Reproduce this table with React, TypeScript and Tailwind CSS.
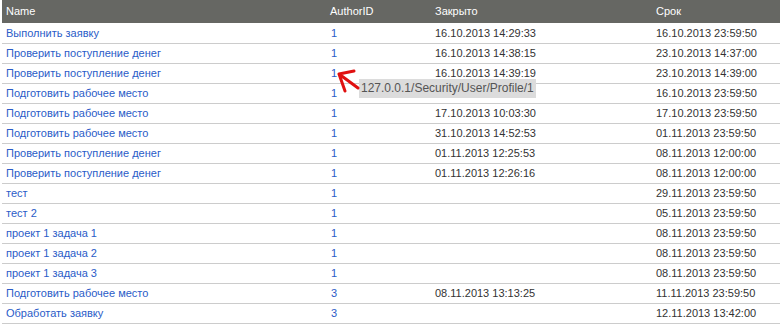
const rows: [string, string, string, string][] = [
  ["Выполнить заявку", "1", "16.10.2013 14:29:33", "16.10.2013 23:59:50"],
  ["Проверить поступление денег", "1", "16.10.2013 14:38:15", "23.10.2013 14:37:00"],
  ["Проверить поступление денег", "1", "16.10.2013 14:39:19", "23.10.2013 14:39:00"],
  ["Подготовить рабочее место", "1", "16.10.2013 14:45:15", "16.10.2013 23:59:50"],
  ["Подготовить рабочее место", "1", "17.10.2013 10:03:30", "17.10.2013 23:59:50"],
  ["Подготовить рабочее место", "1", "31.10.2013 14:52:53", "01.11.2013 23:59:50"],
  ["Проверить поступление денег", "1", "01.11.2013 12:25:53", "08.11.2013 12:00:00"],
  ["Проверить поступление денег", "1", "01.11.2013 12:26:16", "08.11.2013 12:00:00"],
  ["тест", "1", "", "29.11.2013 23:59:50"],
  ["тест 2", "1", "", "05.11.2013 23:59:50"],
  ["проект 1 задача 1", "1", "", "08.11.2013 23:59:50"],
  ["проект 1 задача 2", "1", "", "08.11.2013 23:59:50"],
  ["проект 1 задача 3", "1", "", "08.11.2013 23:59:50"],
  ["Подготовить рабочее место", "3", "08.11.2013 13:13:25", "11.11.2013 23:59:50"],
  ["Обработать заявку", "3", "", "12.11.2013 13:42:00"],
]

export default function App() {
  return (
    <div className="relative w-[784px] h-[331px] bg-white font-['Liberation_Sans',sans-serif] text-[11px]">
      <table className="ml-[2px] w-[778px] border-collapse table-fixed">
        <colgroup>
          <col className="w-[324px]" />
          <col className="w-[105px]" />
          <col className="w-[221px]" />
          <col className="w-[128px]" />
        </colgroup>
        <thead>
          <tr className="h-[23px] bg-[#666763] text-white text-left">
            <th className="font-normal pl-[4px]">Name</th>
            <th className="font-normal pl-[4px]">AuthorID</th>
            <th className="font-normal pl-[4px]">Закрыто</th>
            <th className="font-normal pl-[4px]">Срок</th>
          </tr>
        </thead>
        <tbody>
          {rows.map((r, i) => (
            <tr key={i} className="h-[20px] border-b border-[#cccccc]">
              <td className="pl-[4px] text-[#2a5cc8]">{r[0]}</td>
              <td className="pl-[5px] text-[#2a5cc8]">{r[1]}</td>
              <td className="pl-[4px] text-[#333]">{r[2]}</td>
              <td className="pl-[4px] text-[#333]">{r[3]}</td>
            </tr>
          ))}
        </tbody>
      </table>

      {/* tooltip over the third row */}
      <div className="absolute left-[359px] top-[79px] h-[19px] px-[2px] bg-[#dcdcdc] text-[#555] text-[12px] leading-[19px]">
        127.0.0.1/Security/User/Profile/1
      </div>
      <svg className="absolute left-[330px] top-[62px]" width="40" height="40" viewBox="0 0 40 40">
        <path d="M28 26 L9 12 M9 12 L24 9 M9 12 L15 29" stroke="#e01010" strokeWidth="3" fill="none" strokeLinecap="round" />
      </svg>
    </div>
  )
}
